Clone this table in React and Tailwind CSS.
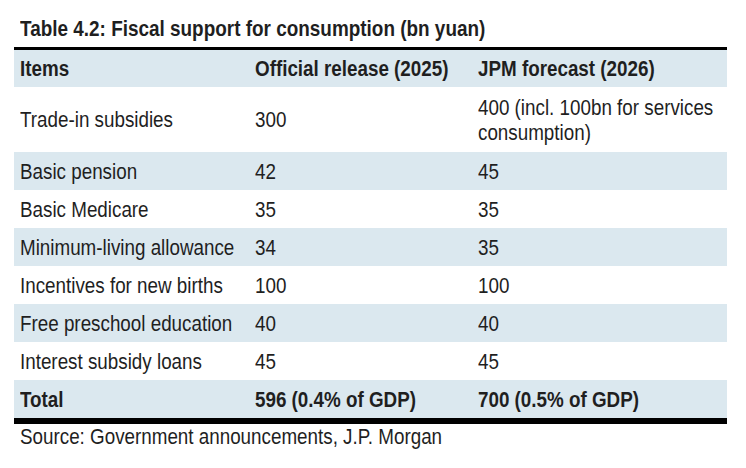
import React from "react";

const rows = [
  { item: "Trade-in subsidies", a: "300", b: ["400 (incl. 100bn for services", "consumption)"], h: "h-[65px]", blue: false },
  { item: "Basic pension", a: "42", b: "45", h: "h-[38px]", blue: true },
  { item: "Basic Medicare", a: "35", b: "35", h: "h-[38px]", blue: false },
  { item: "Minimum-living allowance", a: "34", b: "35", h: "h-[38px]", blue: true },
  { item: "Incentives for new births", a: "100", b: "100", h: "h-[38px]", blue: false },
  { item: "Free preschool education", a: "40", b: "40", h: "h-[38px]", blue: true },
  { item: "Interest subsidy loans", a: "45", b: "45", h: "h-[38px]", blue: false },
];

function T({ children }) {
  return <span className="inline-block origin-left scale-x-[0.855] whitespace-nowrap">{children}</span>;
}

export default function App() {
  return (
    <div
      className="w-[746px] h-[468px] bg-white text-[#1f1f1f] overflow-hidden"
      style={{ fontFamily: '"Liberation Sans", Arial, sans-serif' }}
    >
      <div className="pt-[17px] pl-[20px] h-[47px]">
        <div className="text-[21.5px] leading-[24px] font-bold whitespace-nowrap">
          <span className="inline-block origin-left scale-x-[0.88]">Table 4.2: Fiscal support for consumption (bn yuan)</span>
        </div>
      </div>
      <div className="ml-[14px] w-[713px]">
        <div className="h-[3px] bg-black" />
        <div className="grid grid-cols-[235px_223px_255px] h-[37px] bg-[#dbe8ef] items-center text-[22px] leading-[25px] font-bold">
          <div className="pl-[6px]"><T>Items</T></div>
          <div className="pl-[6px]"><T>Official release (2025)</T></div>
          <div className="pl-[6px]"><T>JPM forecast (2026)</T></div>
        </div>
        {rows.map((r, i) => (
          <div
            key={i}
            className={`grid grid-cols-[235px_223px_255px] items-center text-[22px] leading-[25px] ${r.h} ${r.blue ? "bg-[#dbe8ef]" : "bg-white"}`}
          >
            <div className="pl-[6px]"><T>{r.item}</T></div>
            <div className="pl-[6px]"><T>{r.a}</T></div>
            <div className="pl-[6px]">
              {Array.isArray(r.b) ? (
                <T>
                  {r.b[0]}
                  <br />
                  {r.b[1]}
                </T>
              ) : (
                <T>{r.b}</T>
              )}
            </div>
          </div>
        ))}
        <div className="grid grid-cols-[235px_223px_255px] h-[38px] bg-[#dbe8ef] items-center text-[22px] leading-[25px] font-bold">
          <div className="pl-[6px]"><T>Total</T></div>
          <div className="pl-[6px]"><T>596 (0.4% of GDP)</T></div>
          <div className="pl-[6px]"><T>700 (0.5% of GDP)</T></div>
        </div>
        <div className="h-[6px] bg-black" />
      </div>
      <div className="pl-[20px] pt-[0px] text-[22px] leading-[25px]">
        <T>Source: Government announcements, J.P. Morgan</T>
      </div>
    </div>
  );
}
